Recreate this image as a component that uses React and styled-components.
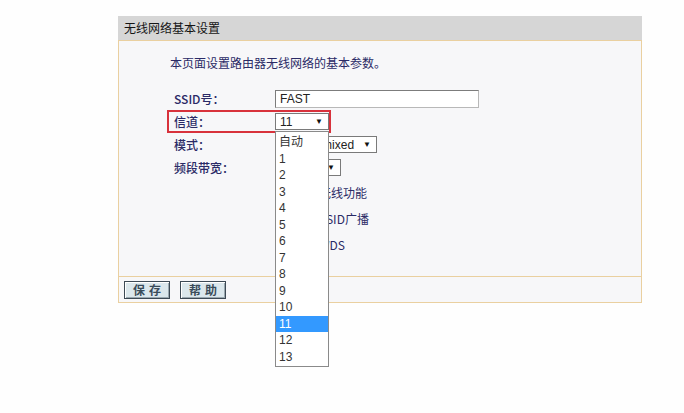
import React from "react";
import styled, { createGlobalStyle } from "styled-components";

const Global = createGlobalStyle`
  * { box-sizing: border-box; }
  html, body { margin: 0; padding: 0; background: #ffffff; }
  body {
    font-family: "Liberation Sans", "Noto Sans CJK SC", sans-serif;
    font-size: 12px;
  }
`;

const Page = styled.div`
  width: 684px;
  height: 413px;
  padding-top: 16px;
  padding-left: 118px;
  background: #fefefe;
`;

const Panel = styled.div`
  width: 524px;
  display: flex;
  flex-direction: column;
`;

const Header = styled.div`
  height: 24px;
  line-height: 24px;
  padding-left: 6px;
  background: #d6d6d6;
  color: #151515;
  font-family: "Noto Sans CJK SC", sans-serif;
  font-size: 12px;
`;

const Body = styled.div`
  height: 236px;
  border: 1px solid #ead0a0;
  border-bottom: none;
  background: #f7f7f9;
  padding-top: 14px;
  display: flex;
  flex-direction: column;
`;

const Intro = styled.div`
  margin-left: 51px;
  height: 16px;
  line-height: 16px;
  color: #2a2a66;
  font-family: "Noto Sans CJK SC", sans-serif;
  font-size: 12px;
  margin-bottom: 16px;
`;

const Form = styled.div`
  margin-left: 48px;
  display: flex;
  flex-direction: column;
`;

const Row = styled.div`
  display: grid;
  grid-template-columns: 101px auto;
  align-items: center;
  height: ${(p) => (p.$tall ? "26px" : "23px")};
  padding-left: 7px;
  width: ${(p) => (p.$highlight ? "164px" : "auto")};
  box-shadow: ${(p) => (p.$highlight ? "inset 0 0 0 2px #d8323c" : "none")};
`;

const Label = styled.span`
  color: #2a2a66;
  font-family: "Noto Sans CJK SC", sans-serif;
  font-size: 12px;
  font-weight: 500;
`;

const TextInput = styled.div`
  width: 204px;
  height: 18px;
  border: 1px solid #7c7c7c;
  border-right-color: #b8b8b8;
  border-bottom-color: #b8b8b8;
  background: #ffffff;
  padding-left: 4px;
  line-height: 16px;
  color: #222;
  font-size: 12px;
`;

const SelectWrap = styled.div`
  position: relative;
  width: ${(p) => p.$w}px;
`;

const SelectBox = styled.div`
  width: 100%;
  height: 17px;
  border: 1px solid #7a7a7a;
  background: #ffffff;
  display: flex;
  align-items: center;
  justify-content: ${(p) => (p.$end ? "flex-end" : "space-between")};
  gap: 9px;
  padding: 0 5px 0 4px;
  overflow: hidden;
  white-space: nowrap;
  color: #222;
  font-family: "Liberation Sans", "Noto Sans CJK SC", sans-serif;
  font-size: 12px;
`;

const Arrow = styled.span`
  font-size: 8px;
  color: #111;
`;

const CheckRow = styled.label`
  grid-column: 2;
  display: flex;
  align-items: center;
  gap: 5px;
  color: #2a2a66;
  font-family: "Noto Sans CJK SC", sans-serif;
  font-size: 12px;
`;

const Check = styled.span`
  width: 13px;
  height: 13px;
  border: 1px solid #7a7a7a;
  background: #fff;
  margin-left: 2px;
`;

const DropList = styled.ul`
  position: absolute;
  top: 18px;
  left: 0;
  width: 54px;
  margin: 0;
  padding: 2px 0 1px;
  list-style: none;
  background: #ffffff;
  border: 1px solid #8a8a8a;
  z-index: 5;
`;

const DropItem = styled.li`
  height: 16.5px;
  line-height: 16.5px;
  padding-left: 3px;
  color: ${(p) => (p.$active ? "#ffffff" : "#333333")};
  background: ${(p) => (p.$active ? "#3399ff" : "transparent")};
  font-family: "Liberation Sans", "Noto Sans CJK SC", sans-serif;
  font-size: 12px;
`;

const Footer = styled.div`
  height: 27px;
  border: 1px solid #ead0a0;
  background: #f7f7f9;
  display: flex;
  align-items: center;
  gap: 10px;
  padding-left: 5px;
`;

const Button = styled.button`
  width: 46px;
  height: 18px;
  padding: 0;
  border: 1px solid #3d4a55;
  box-shadow: inset 1px 1px 0 #ffffff, inset -1px -1px 0 #9aa8b0;
  background: #dbe7ec;
  color: #3a4c5a;
  font-family: "Noto Sans CJK SC", sans-serif;
  font-size: 12px;
  font-weight: 700;
  letter-spacing: 4px;
  text-indent: 4px;
  line-height: 16px;
`;

const channels = ["自动", "1", "2", "3", "4", "5", "6", "7", "8", "9", "10", "11", "12", "13"];

export default function App() {
  return (
    <>
      <Global />
      <Page>
        <Panel>
          <Header>无线网络基本设置</Header>
          <Body>
            <Intro>本页面设置路由器无线网络的基本参数。</Intro>
            <Form>
              <Row>
                <Label>SSID号：</Label>
                <TextInput>FAST</TextInput>
              </Row>
              <Row $highlight>
                <Label>信道：</Label>
                <SelectWrap $w={54}>
                  <SelectBox>
                    <span>11</span>
                    <Arrow>▼</Arrow>
                  </SelectBox>
                  <DropList>
                    {channels.map((c) => (
                      <DropItem key={c} $active={c === "11"}>
                        {c}
                      </DropItem>
                    ))}
                  </DropList>
                </SelectWrap>
              </Row>
              <Row>
                <Label>模式：</Label>
                <SelectWrap $w={102}>
                  <SelectBox $end>
                    <span>11bgn mixed</span>
                    <Arrow>▼</Arrow>
                  </SelectBox>
                </SelectWrap>
              </Row>
              <Row>
                <Label>频段带宽：</Label>
                <SelectWrap $w={66}>
                  <SelectBox>
                    <span>自动</span>
                    <Arrow>▼</Arrow>
                  </SelectBox>
                </SelectWrap>
              </Row>
              <Row $tall>
                <CheckRow>
                  <Check />
                  开启无线功能
                </CheckRow>
              </Row>
              <Row $tall>
                <CheckRow>
                  <Check />
                  开启SSID广播
                </CheckRow>
              </Row>
              <Row $tall>
                <CheckRow>
                  <Check />
                  开启WDS
                </CheckRow>
              </Row>
            </Form>
          </Body>
          <Footer>
            <Button>保存</Button>
            <Button>帮助</Button>
          </Footer>
        </Panel>
      </Page>
    </>
  );
}
